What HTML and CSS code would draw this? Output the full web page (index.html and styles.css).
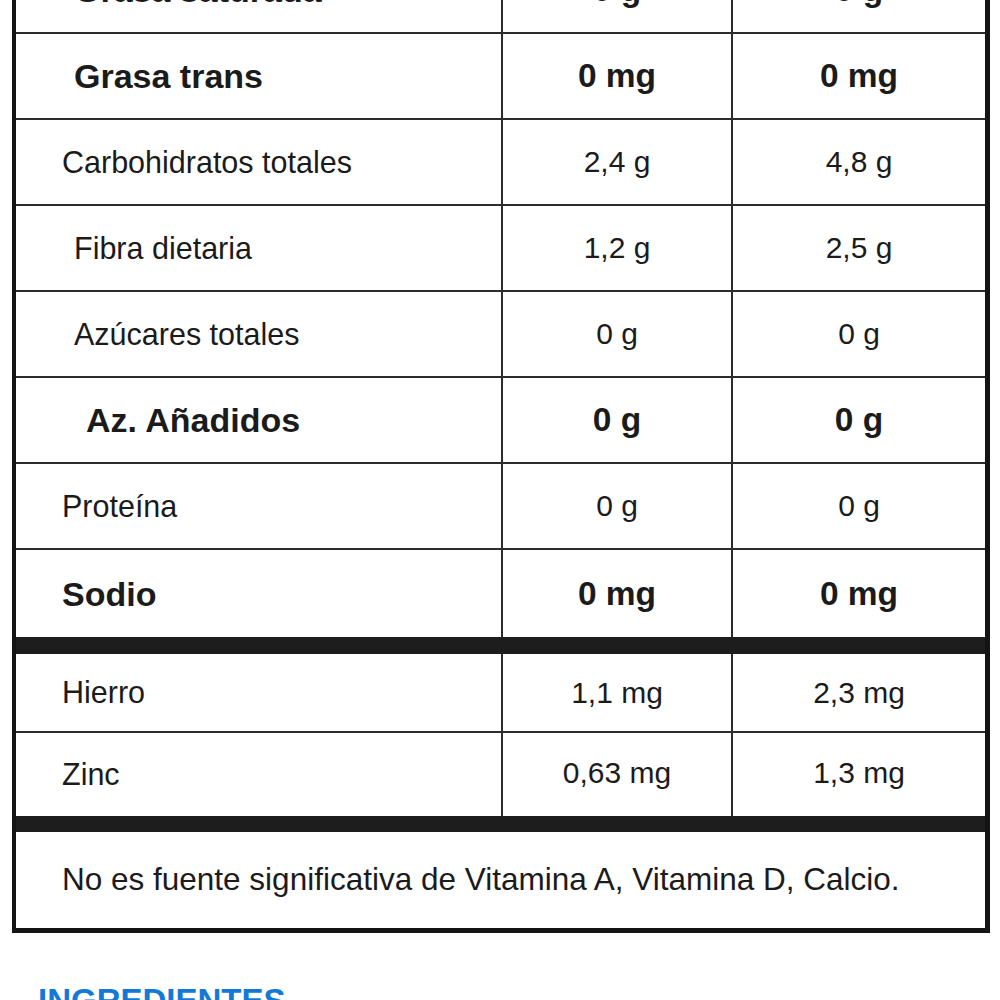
FILE: index.html
```html
<!DOCTYPE html>
<html lang="es">
<head>
<meta charset="utf-8">
<title>Información nutrimental</title>
<link rel="stylesheet" href="styles.css">
</head>
<body>
<div class="panel">
  <div class="grid">
    <div class="cell label bold ind1">Grasa saturada</div><div class="cell val bold">0 g</div><div class="cell val bold">0 g</div>
    <div class="cell label bold ind1">Grasa trans</div><div class="cell val bold">0 mg</div><div class="cell val bold">0 mg</div>
    <div class="cell label">Carbohidratos totales</div><div class="cell val">2,4 g</div><div class="cell val">4,8 g</div>
    <div class="cell label ind1">Fibra dietaria</div><div class="cell val">1,2 g</div><div class="cell val">2,5 g</div>
    <div class="cell label ind1">Azúcares totales</div><div class="cell val">0 g</div><div class="cell val">0 g</div>
    <div class="cell label bold ind2">Az. Añadidos</div><div class="cell val bold">0 g</div><div class="cell val bold">0 g</div>
    <div class="cell label">Proteína</div><div class="cell val">0 g</div><div class="cell val">0 g</div>
    <div class="cell label bold tall">Sodio</div><div class="cell val bold tall">0 mg</div><div class="cell val bold tall">0 mg</div>
  </div>
  <div class="band band-a"></div>
  <div class="grid">
    <div class="cell label hierro">Hierro</div><div class="cell val hierro">1,1 mg</div><div class="cell val hierro">2,3 mg</div>
    <div class="cell label zinc">Zinc</div><div class="cell val zinc up">0,63 mg</div><div class="cell val zinc up">1,3 mg</div>
  </div>
  <div class="band band-b"></div>
  <div class="note">No es fuente significativa de Vitamina A, Vitamina D, Calcio.</div>
</div>
<h2 class="heading">INGREDIENTES</h2>
</body>
</html>
```

FILE: styles.css
```css
html, body {
  margin: 0;
  padding: 0;
  background: #ffffff;
}
body {
  font-family: "Liberation Sans", Arial, Helvetica, sans-serif;
  color: #1b1b1b;
  overflow: hidden;
}
.panel {
  margin: -52px 0 0 12px;
  width: 978px;
  box-sizing: border-box;
  border-style: solid;
  border-color: #141414;
  border-width: 0 5px 5px 4px;
  background: #fff;
}
.grid {
  display: grid;
  grid-template-columns: 485px 228px 252px;
  gap: 2px;
  background: #2c2c2c;
}
.cell {
  background: #fff;
  height: 84px;
  display: flex;
  align-items: center;
  font-size: 30.5px;
  line-height: 1;
}
.label {
  padding-left: 46px;
}
.ind1 { padding-left: 58px; }
.ind2 { padding-left: 70px; }
.val {
  justify-content: center;
  font-size: 30px;
}
.bold {
  font-weight: 700;
  font-size: 34px;
}
.val.bold {
  font-size: 33.5px;
}
.tall { height: 87px; }
.hierro { height: 77px; }
.zinc { height: 83px; }
.up { padding-bottom: 4px; box-sizing: border-box; }
.band {
  background: #1d1d1d;
}
.band-a { height: 17px; }
.band-b { height: 16px; }
.note {
  height: 96px;
  display: flex;
  align-items: center;
  padding-left: 46px;
  font-size: 31.5px;
  line-height: 1;
}
.heading {
  margin: 51px 0 0 38px;
  font-size: 33px;
  line-height: 1;
  font-weight: 700;
  color: #1479d6;
}
```
